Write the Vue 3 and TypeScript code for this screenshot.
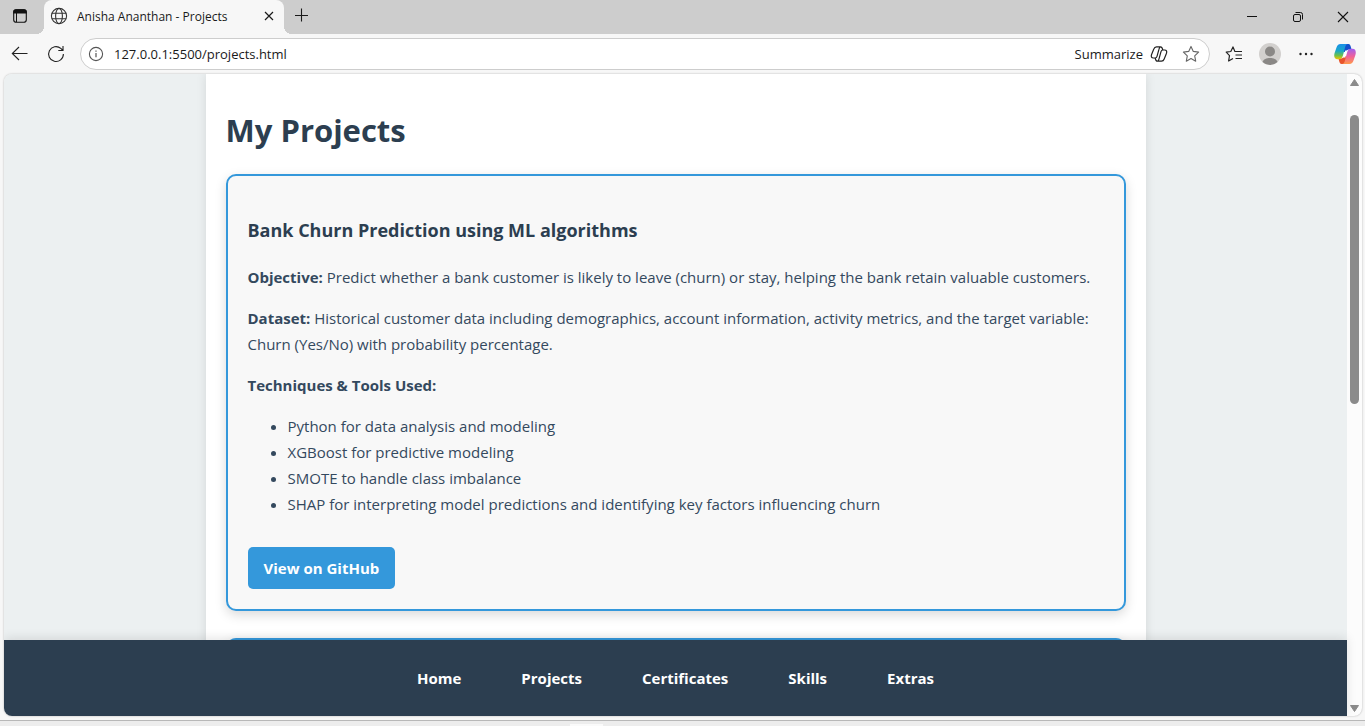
<script setup lang="ts">
import { ref } from 'vue'

const address = ref<string>('127.0.0.1:5500/projects.html')

const links: string[] = ['Home', 'Projects', 'Certificates', 'Skills', 'Extras']

const tools: string[] = [
  'Python for data analysis and modeling',
  'XGBoost for predictive modeling',
  'SMOTE to handle class imbalance',
  'SHAP for interpreting model predictions and identifying key factors influencing churn',
]
</script>

<template>
  <div class="window">
    <header class="tabbar">
      <button class="icon-btn actions" type="button" aria-label="Tab actions">
        <svg width="16" height="16" viewBox="0 0 16 16">
          <rect x="1.7" y="1.7" width="12.6" height="12.6" rx="2.6" fill="none" stroke="#111" stroke-width="1.1" />
          <path d="M1.2 5.400V4a2.800 2.800 0 0 1 2.800-2.800h8A2.800 2.800 0 0 1 14.800 4v1.400z" fill="#111" />
          <path d="M4.500 5v9" stroke="#111" stroke-width="1" />
        </svg>
      </button>
      <div class="tab">
        <svg class="globe" width="18" height="18" viewBox="0 0 18 18" fill="none" stroke="#333" stroke-width="1.100">
          <circle cx="9" cy="9" r="7.600" />
          <ellipse cx="9" cy="9" rx="3.400" ry="7.600" />
          <path d="M1.900 6.300h14.200M1.900 11.700h14.200" />
        </svg>
        <span class="tab-title">Anisha Ananthan - Projects</span>
        <button class="icon-btn close-tab" type="button" aria-label="Close tab">
          <svg width="10" height="10" viewBox="0 0 10 10"><path d="M1 1l8 8M9 1L1 9" stroke="#1a1a1a" stroke-width="1.200" /></svg>
        </button>
      </div>
      <button class="icon-btn new-tab" type="button" aria-label="New tab">
        <svg width="14" height="14" viewBox="0 0 14 14"><path d="M7.500 0.500v13M1 7.500h13" stroke="#1a1a1a" stroke-width="1.100" /></svg>
      </button>
      <div class="controls">
        <button class="icon-btn" type="button" aria-label="Minimize">
          <svg width="12" height="12" viewBox="0 0 12 12"><path d="M1 5.500h10" stroke="#111" /></svg>
        </button>
        <button class="icon-btn" type="button" aria-label="Restore">
          <svg width="12" height="12" viewBox="0 0 12 12" fill="none" stroke="#111">
            <rect x="1.500" y="3.500" width="7" height="7" rx="1.500" />
            <path d="M3.500 1.500H8.500a2 2 0 0 1 2 2V8.500" />
          </svg>
        </button>
        <button class="icon-btn" type="button" aria-label="Close">
          <svg width="12" height="12" viewBox="0 0 12 12"><path d="M1 1l10 10M11 1L1 11" stroke="#111" stroke-width="1.100" /></svg>
        </button>
      </div>
    </header>

    <div class="toolbar">
      <button class="icon-btn back" type="button" aria-label="Back">
        <svg width="18" height="16" viewBox="0 0 18 16" fill="none" stroke="#222" stroke-width="1.100"><path d="M16.500 7.500H1.500M8 1L1.300 7.500L8 14" /></svg>
      </button>
      <button class="icon-btn reload" type="button" aria-label="Refresh">
        <svg width="18" height="18" viewBox="0 0 18 18" fill="none" stroke="#222" stroke-width="1.100"><path d="M16.400 9A7.400 7.400 0 1 1 13.800 3.400L16 5.500M16 1v4.500H11.300" /></svg>
      </button>
      <div class="address">
        <svg width="16" height="16" viewBox="0 0 16 16" fill="none" stroke="#555">
          <circle cx="8" cy="8" r="6.600" stroke-width="1.100" />
          <path d="M8 7v4.300M8 4.500v1.300" stroke-width="1.200" />
        </svg>
        <input v-model="address" type="text" aria-label="Address" spellcheck="false" />
        <button class="summarize" type="button">
          Summarize
          <svg width="18" height="18" viewBox="0 0 18 18" fill="none" stroke="#222" stroke-width="1.200" stroke-linejoin="round">
            <path id="lobe" d="M12.800 5.200C12.500 3.200 12 1.800 10.500 1.800H6.500C5 1.800 4.300 2.600 3.800 4L1.500 9.800C.8 11.800 1.700 13 3.300 13H5.300C6.300 13 6.700 12.300 7 11.300L9 4.200C9.300 2.900 9.700 1.800 10.500 1.800" />
            <path d="M5.200 12.800C5.500 14.800 6 16.200 7.500 16.200H11.500C13 16.200 13.700 15.400 14.200 14L16.500 8.200C17.200 6.200 16.300 5 14.700 5H12.700C11.700 5 11.300 5.700 11 6.700L9 13.800C8.700 15.100 8.300 16.200 7.500 16.200" />
          </svg>
        </button>
        <button class="icon-btn star" type="button" aria-label="Add to favorites">
          <svg width="18" height="18" viewBox="0 0 18 18" fill="none" stroke="#666" stroke-width="1.100" stroke-linejoin="round"><path d="M9 1.400l2.300 5 5.300.700-3.900 3.700 1 5.400L9 13.600l-4.700 2.600 1-5.400L1.400 7.100l5.300-.700z" /></svg>
        </button>
      </div>
      <div class="tools">
        <button class="icon-btn" type="button" aria-label="Favorites">
          <svg width="18" height="18" viewBox="0 0 18 18" fill="none" stroke="#222" stroke-width="1.200" stroke-linejoin="round">
            <path d="M11.500 6.500H9.900L8 1.900 5.800 6.500l-4.600.700 3.300 3.400-.900 5.400L8 13.500" />
            <path d="M11 6.500H17M10.500 10H17M10.500 13.500H17" stroke-width="1.100" />
          </svg>
        </button>
        <button class="icon-btn" type="button" aria-label="Profile">
          <svg width="22" height="22" viewBox="0 0 22 22">
            <circle cx="11" cy="11" r="11" fill="#d2d0ce" />
            <circle cx="11" cy="8.500" r="5" fill="#8a8886" />
            <path d="M3.500 19C5 13.500 17 13.500 18.500 19A11 11 0 0 1 3.500 19z" fill="#8a8886" />
          </svg>
        </button>
        <button class="icon-btn" type="button" aria-label="Settings and more">
          <svg width="16" height="4" viewBox="0 0 16 4" fill="#222"><circle cx="2.500" cy="2" r="1.200" /><circle cx="8" cy="2" r="1.200" /><circle cx="13.500" cy="2" r="1.200" /></svg>
        </button>
        <button class="icon-btn" type="button" aria-label="Copilot">
          <svg width="22" height="20" viewBox="0 0 22 20">
            <defs>
              <linearGradient id="cool" x1="0" y1="0" x2="0" y2="1">
                <stop offset="0" stop-color="#1b8fe8" /><stop offset=".45" stop-color="#18a8c8" /><stop offset=".75" stop-color="#6cc04a" /><stop offset="1" stop-color="#f2c500" />
              </linearGradient>
              <linearGradient id="warm" x1="0" y1="0" x2="0" y2="1">
                <stop offset="0" stop-color="#a060f0" /><stop offset=".5" stop-color="#f0609a" /><stop offset="1" stop-color="#ff9a4a" />
              </linearGradient>
            </defs>
            <path d="M10 0h4.500C16 0 16.400 1.500 17 3.500L17.500 5.500H15C13.300 5.500 12.700 6.500 12.200 8L9.500 8z" fill="#1450cc" />
            <path d="M12 20H7.500C6 20 5.600 18.500 5 16.500L4.500 14.500H7C8.700 14.500 9.300 13.500 9.800 12L12.500 12z" fill="#e8542c" />
            <path d="M6.500 0H14c-1.800 0-2.400 1.500-2.900 3.300L9 11.300C8.300 14 7.300 15.200 5 15.200H3.500C.2 15.200-.3 12 .6 9L2.500 3.500C3.300 1.200 4.300 0 6.500 0z" fill="url(#cool)" />
            <path d="M15.500 20H8c1.800 0 2.400-1.500 2.900-3.300L13 8.700C13.700 6 14.700 4.800 17 4.800h1.500c3.300 0 3.800 3.200 2.900 6.200L19.500 16.500C18.700 18.800 17.700 20 15.500 20z" fill="url(#warm)" />
            <path d="M11.300 6.500H13.600C12.900 7.300 12.700 8 12.500 8.700L11.300 13.500H8.400C9.100 12.700 9.300 12 9.500 11.300z" fill="#fff" />
          </svg>
        </button>
      </div>
    </div>

    <div class="viewport">
      <div class="page">
        <div class="scroll">
          <main class="container">
            <h1>My Projects</h1>
            <article class="card">
              <h3>Bank Churn Prediction using ML algorithms</h3>
              <p><strong>Objective:</strong> Predict whether a bank customer is likely to leave (churn) or stay, helping the bank retain valuable customers.</p>
              <p><strong>Dataset:</strong> Historical customer data including demographics, account information, activity metrics, and the target variable: Churn (Yes/No) with probability percentage.</p>
              <p><strong>Techniques &amp; Tools Used:</strong></p>
              <ul>
                <li v-for="tool in tools" :key="tool">{{ tool }}</li>
              </ul>
              <a class="github" href="#">View on GitHub</a>
            </article>
            <article class="card"></article>
          </main>
        </div>
        <nav class="footer">
          <a v-for="link in links" :key="link" href="#">{{ link }}</a>
        </nav>
      </div>
      <div class="scrollbar">
        <svg width="9" height="7" viewBox="0 0 9 7"><path d="M4.500 0.500L8.500 6.500H0.500z" fill="#8b8b8b" stroke="#8b8b8b" stroke-linejoin="round" /></svg>
        <div class="track"><div class="thumb"></div></div>
        <svg width="9" height="7" viewBox="0 0 9 7"><path d="M4.500 6.500L8.500 0.500H0.500z" fill="#8b8b8b" stroke="#8b8b8b" stroke-linejoin="round" /></svg>
      </div>
    </div>
    <div class="taskbar"><div class="peek"></div></div>
  </div>
</template>

<style>
body {
  margin: 0;
  overflow: hidden;
}
</style>

<style scoped>
.window {
  display: flex;
  flex-direction: column;
  height: 100vh;
  background: #f7f7f7;
  font-family: 'Open Sans', 'Noto Sans', sans-serif;
  color: #1a1a1a;
}
button,
input {
  font: inherit;
  color: inherit;
  border: 0;
  padding: 0;
  background: none;
}
svg {
  display: block;
  flex: none;
}
.icon-btn {
  display: flex;
  align-items: center;
  justify-content: center;
  flex: none;
}

.tabbar {
  display: flex;
  align-items: stretch;
  height: 34px;
  flex: none;
  background: #cdcdcd;
}
.actions {
  width: 44px;
  padding-right: 4px;
  padding-bottom: 2px;
}
.tab {
  position: relative;
  display: flex;
  align-items: center;
  box-sizing: border-box;
  width: 240px;
  padding: 0 10px 2px 6px;
  border-radius: 8px 8px 0 0;
  background: #f7f7f7;
  font-size: 12px;
}
.tab::before,
.tab::after {
  content: '';
  position: absolute;
  bottom: 0;
  width: 8px;
  height: 8px;
}
.tab::before {
  right: 100%;
  background: radial-gradient(circle at 0 0, #cdcdcd 8px, #f7f7f7 8px);
}
.tab::after {
  left: 100%;
  background: radial-gradient(circle at 100% 0, #cdcdcd 8px, #f7f7f7 8px);
}
.tab-title {
  flex: 1;
  margin-left: 9px;
  white-space: nowrap;
}
.new-tab {
  width: 34px;
  padding-bottom: 4px;
}
.controls {
  display: flex;
  margin-left: auto;
}
.controls .icon-btn {
  width: 46px;
}
.controls .icon-btn:last-child {
  width: 44px;
}

.toolbar {
  display: flex;
  align-items: center;
  height: 40px;
  flex: none;
}
.back {
  width: 40px;
}
.reload {
  width: 32px;
}
.address {
  display: flex;
  align-items: center;
  flex: 1;
  box-sizing: border-box;
  height: 32px;
  margin-left: 8px;
  padding: 0 9px 0 7px;
  border: 1px solid #cdcdcd;
  border-radius: 16px;
  background: #fff;
  font-size: 13px;
}
.address input {
  flex: 1;
  min-width: 0;
  margin-left: 10px;
  outline: none;
}
.summarize {
  display: flex;
  align-items: center;
  gap: 7px;
}
.star {
  margin-left: 14px;
}
.tools {
  display: flex;
  padding-left: 6px;
}
.tools .icon-btn {
  width: 36px;
}
.tools .icon-btn:last-child {
  width: 41px;
}

.viewport {
  display: flex;
  flex: 1;
  min-height: 0;
  margin: 0 3px 0 4px;
  border-radius: 8px;
  overflow: hidden;
  background: #fcfcfc;
  box-shadow: 0 0 2px rgba(0, 0, 0, 0.3);
}
.page {
  display: flex;
  flex-direction: column;
  flex: 1;
  min-width: 0;
  background: #ecf0f1;
}
.scroll {
  flex: 1;
  min-height: 0;
  overflow: hidden;
}
.container {
  box-sizing: border-box;
  max-width: 940px;
  min-height: 100%;
  margin: 0 auto;
  padding: 31px 20px;
  background: #fff;
  box-shadow: 0 0 10px rgba(0, 0, 0, 0.1);
  color: #34495e;
  font-size: 15px;
  line-height: 26px;
}
h1 {
  margin: 0 0 19px;
  color: #2c3e50;
  font-size: 31px;
  line-height: 50px;
}
.card {
  margin-bottom: 27px;
  padding: 20px;
  border: 2px solid #3498db;
  border-radius: 10px;
  background: #f8f8f8;
  box-shadow: 0 4px 12px rgba(0, 0, 0, 0.15);
}
h3 {
  margin: 19px 0;
  color: #2c3e50;
  font-size: 18px;
  line-height: 30px;
}
p {
  margin: 0 0 15px;
}
ul {
  margin: 0 0 30px;
  padding-left: 40px;
}
.github {
  display: inline-block;
  padding: 8px 16px;
  border-radius: 5px;
  background: #3498db;
  color: #fff;
  font-weight: 700;
  text-decoration: none;
  vertical-align: top;
}
.footer {
  position: relative;
  display: flex;
  justify-content: center;
  gap: 60px;
  padding: 25px 0;
  background: #2c3e50;
  box-shadow: 0 -2px 10px rgba(0, 0, 0, 0.1);
  line-height: 26px;
}
.footer a {
  color: #fff;
  font-size: 15px;
  font-weight: 700;
  text-decoration: none;
}

.scrollbar {
  display: flex;
  flex-direction: column;
  align-items: center;
  flex: none;
  width: 15px;
  padding: 5px 0 4px;
  box-sizing: border-box;
}
.track {
  display: flex;
  flex-direction: column;
  flex: 1;
  width: 9px;
  padding-top: 29px;
}
.thumb {
  height: 49%;
  border-radius: 5px;
  background: #8b8b8b;
}
.taskbar {
  display: flex;
  height: 5px;
  flex: none;
  margin-top: 4px;
  border-top: 1px solid #b8b8b8;
  background: #ededed;
}
.peek {
  width: 33px;
  height: 2px;
  margin: auto 0 0 570px;
  background: #fafafa;
}
</style>
